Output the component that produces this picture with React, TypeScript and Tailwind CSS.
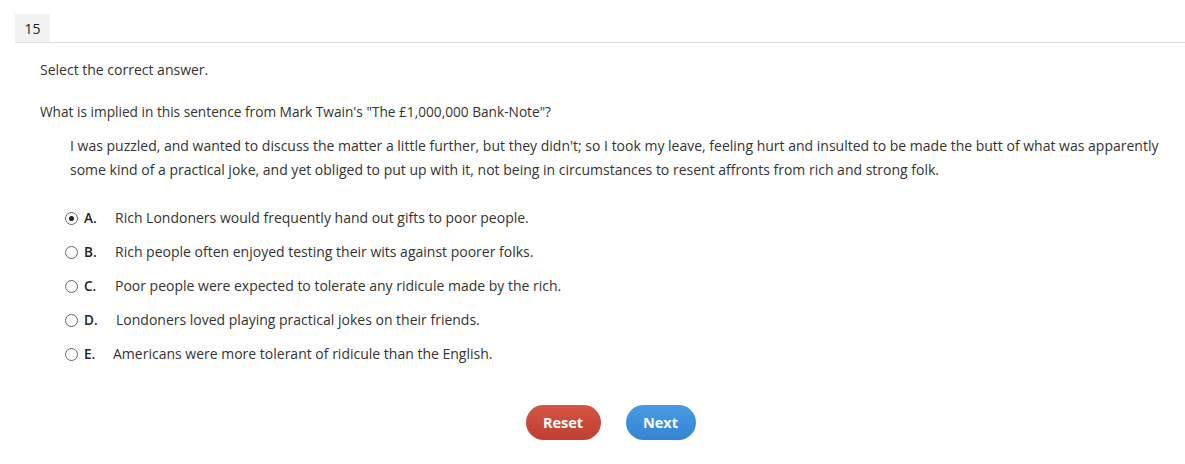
import React from "react";

const options = [
  { l: "A.", t: "Rich Londoners would frequently hand out gifts to poor people.", sel: true, ml: "ml-[5px]" },
  { l: "B.", t: "Rich people often enjoyed testing their wits against poorer folks.", sel: false, ml: "ml-[5px]" },
  { l: "C.", t: "Poor people were expected to tolerate any ridicule made by the rich.", sel: false, ml: "ml-[5px]" },
  { l: "D.", t: "Londoners loved playing practical jokes on their friends.", sel: false, ml: "ml-[6px]" },
  { l: "E.", t: "Americans were more tolerant of ridicule than the English.", sel: false, ml: "ml-[3px]" },
];

function Radio({ sel }: { sel: boolean }) {
  return (
    <span className="w-[13px] h-[13px] rounded-full border border-[#666] bg-white flex items-center justify-center self-center">
      {sel && <span className="w-[5px] h-[5px] rounded-full bg-[#222]" />}
    </span>
  );
}

export default function App() {
  return (
    <div className="w-[1185px] h-[464px] bg-white text-[#333] text-[14px]" style={{ fontFamily: '"Open Sans", sans-serif' }}>
      <div className="pt-[14px] pl-[15px]">
        <div className="border-b border-[#dedede] flex">
          <div className="w-[35px] h-[28px] bg-[#f2f2f2] flex items-center justify-center text-[14px] text-[#222]">15</div>
        </div>
      </div>
      <div className="pl-[40px] pr-[20px]">
        <p className="mt-[17px] leading-[20px]">Select the correct answer.</p>
        <p className="mt-[22px] leading-[20px] text-[13.68px]">What is implied in this sentence from Mark Twain's "The £1,000,000 Bank-Note"?</p>
        <p className="mt-[12px] ml-[30px] leading-[24px]">
          I was puzzled, and wanted to discuss the matter a little further, but they didn't; so I took my leave, feeling hurt and insulted to be made the butt of what was apparently some kind of a practical joke, and yet obliged to put up with it, not being in circumstances to resent affronts from rich and strong folk.
        </p>
        <div className="mt-[19px] ml-[25px] flex flex-col">
          {options.map((o) => (
            <div key={o.l} className="h-[34px] flex items-center">
              <Radio sel={o.sel} />
              <span className="ml-[6px] w-[26px] font-semibold text-[13.5px] text-[#222] leading-[20px]">{o.l}</span>
              <span className={`${o.ml} leading-[20px]`}>{o.t}</span>
            </div>
          ))}
        </div>
      </div>
      <div className="mt-[34px] flex justify-center gap-[25px] pl-[36px]">
        <button className="w-[75px] h-[35px] rounded-full bg-gradient-to-b from-[#d45544] to-[#be3f31] text-white font-bold text-[14.5px]">Reset</button>
        <button className="w-[70px] h-[35px] rounded-full bg-gradient-to-b from-[#4a9ae3] to-[#3584d3] text-white font-bold text-[14.5px]">Next</button>
      </div>
    </div>
  );
}
